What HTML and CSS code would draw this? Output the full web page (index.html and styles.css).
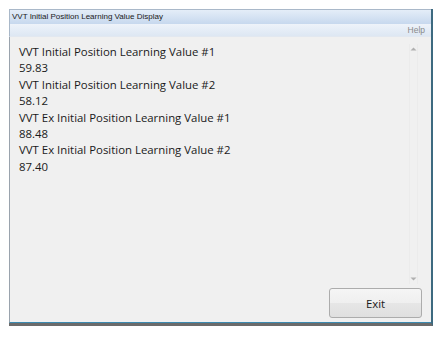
FILE: index.html
```html
<!DOCTYPE html>
<html>
<head>
<meta charset="utf-8">
<link rel="stylesheet" href="styles.css">
</head>
<body>
<div class="window">
  <div class="titlebar">VVT Initial Position Learning Value Display</div>
  <div class="menubar"><span class="menu-item">Help</span></div>
  <div class="client">
    <div class="panel">
      <div class="list">
        <div class="line">VVT Initial Position Learning Value #1</div>
        <div class="line">59.83</div>
        <div class="line">VVT Initial Position Learning Value #2</div>
        <div class="line">58.12</div>
        <div class="line">VVT Ex Initial Position Learning Value #1</div>
        <div class="line">88.48</div>
        <div class="line">VVT Ex Initial Position Learning Value #2</div>
        <div class="line">87.40</div>
      </div>
      <div class="scrollbar">
        <svg class="arrow" width="7" height="4" viewBox="0 0 7 4"><path d="M0.5 3.5 L3.5 0.5 L6.5 3.5 Z" fill="#b0b0b0"/></svg>
        <svg class="arrow" width="7" height="4" viewBox="0 0 7 4"><path d="M0.5 0.5 L3.5 3.5 L6.5 0.5 Z" fill="#b0b0b0"/></svg>
      </div>
    </div>
    <div class="footer">
      <button class="btn">Exit</button>
    </div>
  </div>
</div>
</body>
</html>
```
FILE: styles.css
```css
html, body {
  margin: 0;
  padding: 0;
  background: #ffffff;
}
body {
  padding: 9px 0 0 9px;
}
.window {
  width: 424px;
  height: 317px;
  display: flex;
  flex-direction: column;
  border-right: 2px solid #3d6a80;
  border-bottom: 3px solid #6b6b6b;
  box-sizing: border-box;
  background: #f0f0f0;
}
.titlebar {
  height: 15px;
  background: linear-gradient(#e4edf8, #c7d8ee);
  border-top: 1px solid #a9b8c9;
  border-left: 1px solid #a9b8c9;
  font-family: "Liberation Sans", Arial, sans-serif;
  font-size: 8px;
  line-height: 14px;
  color: #1a1a1a;
  padding-left: 2px;
  box-sizing: border-box;
}
.menubar {
  height: 13px;
  background: linear-gradient(#eef3fa, #dde7f3);
  border-left: 1px solid #a9b8c9;
  border-bottom: 1px solid #e2e8f0;
  display: flex;
  justify-content: flex-end;
  align-items: center;
  padding-right: 6px;
  box-sizing: border-box;
}
.menu-item {
  font-family: "Liberation Sans", Arial, sans-serif;
  font-size: 8.5px;
  color: #8a8a8a;
}
.client {
  flex: 1;
  display: flex;
  flex-direction: column;
  border-left: 1px solid #9aa3ad;
  border-bottom: 1px solid #3c8ab0;
  background: #f0f0f0;
}
.panel {
  flex: 1;
  display: flex;
  padding: 7px 12px 0 9px;
}
.list {
  flex: 1;
  font-family: "Open Sans", "Segoe UI", sans-serif;
  font-size: 11.4px;
  color: #1a1a1a;
}
.line {
  height: 16.4px;
  line-height: 16.4px;
}
.scrollbar {
  width: 9px;
  height: 240px;
  display: flex;
  flex-direction: column;
  justify-content: space-between;
  align-items: center;
  padding: 3px 0;
  box-sizing: border-box;
  border-left: 1px solid #ebebeb;
  border-right: 1px solid #ebebeb;
  margin-right: 1px;
}
.arrow {
  display: block;
}
.footer {
  display: flex;
  justify-content: flex-end;
  padding: 0 9px 4px 0;
}
.btn {
  width: 93px;
  height: 30px;
  border: 1px solid #acacac;
  border-radius: 3px;
  background: linear-gradient(#f5f5f5 0%, #efefef 50%, #e6e6e6 51%, #dfdfdf 100%);
  font-family: "Open Sans", "Segoe UI", sans-serif;
  font-size: 11.4px;
  color: #1a1a1a;
  padding: 0;
}
```
